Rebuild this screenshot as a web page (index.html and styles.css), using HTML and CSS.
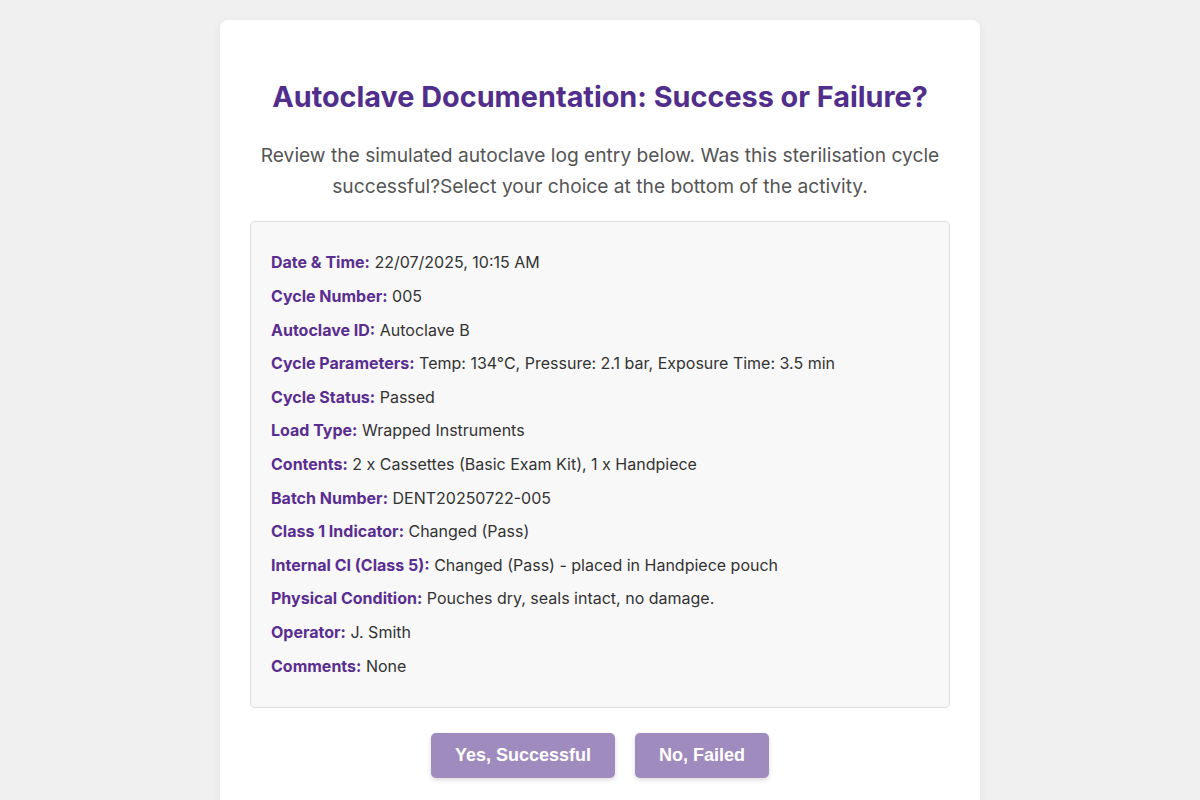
FILE: index.html
```html
<!DOCTYPE html>
<html lang="en">
<head>
<meta charset="utf-8">
<title>Autoclave Documentation</title>
<link rel="stylesheet" href="styles.css">
</head>
<body>
<div class="card">
  <h1 class="title">Autoclave Documentation: Success or Failure?</h1>
  <p class="intro">Review the simulated autoclave log entry below. Was this sterilisation cycle successful?Select your choice at the bottom of the activity.</p>
  <div class="log">
    <p class="row"><span class="label">Date &amp; Time:</span> 22/07/2025, 10:15 AM</p>
    <p class="row"><span class="label">Cycle Number:</span> 005</p>
    <p class="row"><span class="label">Autoclave ID:</span> Autoclave B</p>
    <p class="row"><span class="label">Cycle Parameters:</span> Temp: 134°C, Pressure: 2.1 bar, Exposure Time: 3.5 min</p>
    <p class="row"><span class="label">Cycle Status:</span> Passed</p>
    <p class="row"><span class="label">Load Type:</span> Wrapped Instruments</p>
    <p class="row"><span class="label">Contents:</span> 2 x Cassettes (Basic Exam Kit), 1 x Handpiece</p>
    <p class="row"><span class="label">Batch Number:</span> DENT20250722-005</p>
    <p class="row"><span class="label">Class 1 Indicator:</span> Changed (Pass)</p>
    <p class="row"><span class="label">Internal CI (Class 5):</span> Changed (Pass) - placed in Handpiece pouch</p>
    <p class="row"><span class="label">Physical Condition:</span> Pouches dry, seals intact, no damage.</p>
    <p class="row"><span class="label">Operator:</span> J. Smith</p>
    <p class="row"><span class="label">Comments:</span> None</p>
  </div>
  <div class="actions">
    <button class="btn">Yes, Successful</button>
    <button class="btn">No, Failed</button>
  </div>
</div>
</body>
</html>
```

FILE: styles.css
```css
html, body {
  margin: 0;
  padding: 0;
}
body {
  background: #f0f0f0;
  font-family: Inter, "Noto Sans", sans-serif;
  color: #333;
  padding-top: 20px;
}
.card {
  width: 760px;
  margin: 0 auto;
  box-sizing: border-box;
  background: #fff;
  border-radius: 8px;
  box-shadow: 0 2px 10px rgba(0,0,0,0.06);
  padding: 40px 30px 40px;
}
.title {
  margin: 19px 0 0;
  font-size: 28.8px;
  line-height: 35px;
  font-weight: 700;
  color: #512d8c;
  text-align: center;
}
.intro {
  margin: 26px 0 20px;
  font-size: 19.2px;
  line-height: 30.7px;
  color: #555;
  text-align: center;
}
.log {
  background: #f8f8f8;
  border: 1px solid #ddd;
  border-radius: 5px;
  padding: 20px;
}
.row {
  margin: 8px 0;
  font-size: 16px;
  line-height: 25.6px;
  color: #333;
}
.label {
  font-weight: 700;
  color: #5a2d91;
}
.actions {
  display: flex;
  justify-content: center;
  gap: 20px;
  margin-top: 25px;
}
.btn {
  font-family: "Liberation Sans", Arial, sans-serif;
  font-size: 18px;
  font-weight: 700;
  line-height: 21px;
  color: #fff;
  background: #a08bbe;
  border: none;
  border-radius: 5px;
  padding: 12px 24px;
  box-shadow: 0 2px 5px rgba(0,0,0,0.15);
}
```
